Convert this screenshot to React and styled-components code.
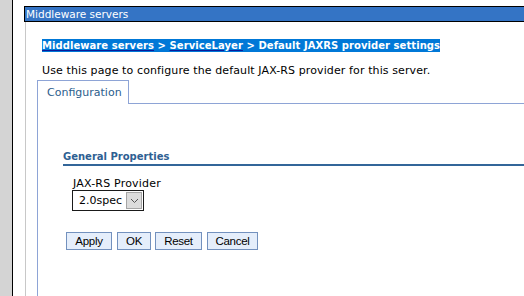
import React from "react";
import styled, { createGlobalStyle } from "styled-components";

const Global = createGlobalStyle`
  html, body { margin: 0; padding: 0; background: #ffffff; }
  body { font-family: "DejaVu Sans", Verdana, sans-serif; overflow: hidden; }
`;

const Page = styled.div`
  display: flex;
  width: 524px;
  height: 296px;
  overflow: hidden;
`;

const SideStrip = styled.div`
  width: 12px;
  flex: none;
  background: #d4d4d4;
  border-right: 1px solid #000;
`;

const Main = styled.div`
  flex: 1;
  display: flex;
  flex-direction: column;
  padding: 6px 0 0 11px;
  min-width: 0;
`;

const TitleBar = styled.div`
  height: 14px;
  border: 1px solid #000;
  border-right: none;
  background: #3474c5;
  color: #fff;
  font-size: 10.5px;
  line-height: 14px;
  padding-left: 1px;
  white-space: nowrap;
`;

const Outer = styled.div`
  flex: 1;
  margin-left: 1px;
  border-left: 1px solid #c8c8c8;
  padding: 17px 0 0 16px;
  display: flex;
  flex-direction: column;
`;

const Crumbs = styled.div`
  align-self: flex-start;
  background: #0078d7;
  color: #fff;
  font-weight: bold;
  font-size: 10px;
  letter-spacing: 0.06px;
  line-height: 13px;
  white-space: nowrap;
`;

const CrumbLink = styled.a`
  color: #fff;
  text-decoration: underline;
  text-decoration-color: #0a1a9a;
`;

const Description = styled.div`
  margin-top: 12px;
  font-size: 11px;
  letter-spacing: 0.11px;
  line-height: 13px;
  color: #000;
  white-space: nowrap;
`;

const TabArea = styled.div`
  margin-top: 3px;
  margin-left: -5px;
  flex: 1;
  display: flex;
  flex-direction: column;
`;

const TabRow = styled.div`
  display: flex;
  align-items: flex-end;
`;

const Tab = styled.div`
  width: 92px;
  height: 24px;
  border: 1px solid #8ea4d6;
  border-bottom: none;
  color: #2b5d8c;
  font-size: 11px;
  line-height: 24px;
  padding-left: 9px;
  box-sizing: border-box;
  background: #fff;
`;

const TabFill = styled.div`
  flex: 1;
  border-bottom: 1px solid #8ea4d6;
`;

const TabPanel = styled.div`
  flex: 1;
  border-left: 1px solid #8ea4d6;
  padding: 47px 0 0 25px;
`;

const SectionTitle = styled.div`
  color: #2e6092;
  font-weight: bold;
  font-size: 10px;
  line-height: 12px;
  padding-bottom: 1px;
  border-bottom: 2px solid #336699;
`;

const Field = styled.div`
  margin-top: 11px;
  padding-left: 9px;
  display: flex;
  flex-direction: column;
  align-items: flex-start;
`;

const Label = styled.label`
  font-size: 11px;
  letter-spacing: 0.2px;
  line-height: 13px;
  color: #000;
  padding-left: 1px;
`;

const Select = styled.div`
  width: 72px;
  box-sizing: border-box;
  height: 21px;
  border: 1px solid #1a1a1a;
  display: flex;
  align-items: stretch;
  background: #fff;
`;

const SelectValue = styled.span`
  flex: 1;
  font-size: 11px;
  line-height: 19px;
  padding-left: 6px;
  color: #000;
`;

const SelectButton = styled.span`
  width: 14px;
  margin: 1px;
  background: #dcdcdc;
  border: 1px solid #a5a5a5;
  display: flex;
  align-items: center;
  justify-content: center;
`;

const Buttons = styled.div`
  margin-top: 21px;
  margin-left: 3px;
  display: flex;
  gap: 4px;
`;

const Button = styled.button`
  width: ${(p) => p.$w}px;
  height: 18px;
  padding: 0;
  margin: 0 ${(p) => p.$mr || 0}px 0 0;
  background: #e5eefb;
  border: 1px solid #7391be;
  font-family: "Liberation Sans", Tahoma, sans-serif;
  font-size: 11.5px;
  letter-spacing: -0.3px;
  line-height: 16px;
  color: #000;
  text-align: center;
`;

export default function App() {
  return (
    <Page>
      <Global />
      <SideStrip />
      <Main>
        <TitleBar>Middleware servers</TitleBar>
        <Outer>
          <Crumbs>
            <CrumbLink>Middleware servers</CrumbLink> &gt;{" "}
            <CrumbLink>ServiceLayer</CrumbLink> &gt; Default JAXRS provider settings
          </Crumbs>
          <Description>
            Use this page to configure the default JAX-RS provider for this server.
          </Description>
          <TabArea>
            <TabRow>
              <Tab>Configuration</Tab>
              <TabFill />
            </TabRow>
            <TabPanel>
              <SectionTitle>General Properties</SectionTitle>
              <Field>
                <Label>JAX-RS Provider</Label>
                <Select>
                  <SelectValue>2.0spec</SelectValue>
                  <SelectButton>
                    <svg width="9" height="6" viewBox="0 0 9 6">
                      <path d="M1 1 L4.5 4.5 L8 1" fill="none" stroke="#555" strokeWidth="1" />
                    </svg>
                  </SelectButton>
                </Select>
              </Field>
              <Buttons>
                <Button $w={46} $mr={1}>Apply</Button>
                <Button $w={34}>OK</Button>
                <Button $w={47} $mr={1}>Reset</Button>
                <Button $w={51}>Cancel</Button>
              </Buttons>
            </TabPanel>
          </TabArea>
        </Outer>
      </Main>
    </Page>
  );
}
